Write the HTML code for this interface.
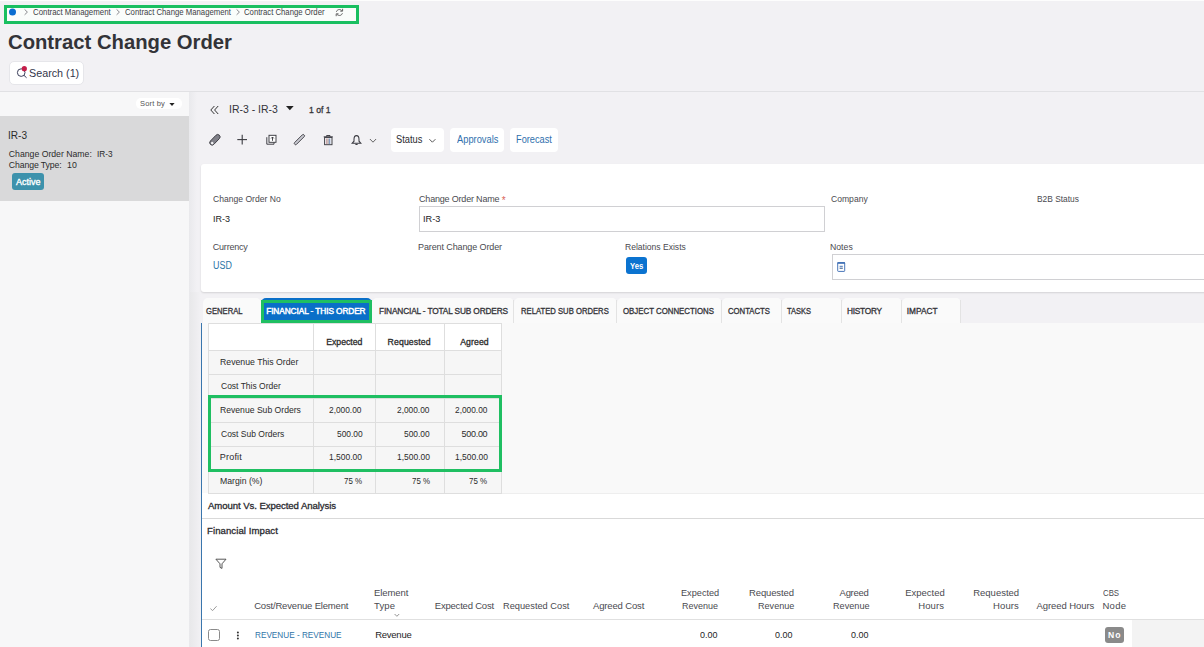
<!DOCTYPE html>
<html><head><meta charset="utf-8"><style>
html,body{margin:0;padding:0}
body{width:1204px;height:647px;overflow:hidden;position:relative;background:#f2f1f4;font-family:"Liberation Sans",sans-serif}
</style></head><body>
<div style="position:absolute;left:0;top:0;width:1204px;height:1px;background:#fdfdfd"></div>
<div style="position:absolute;left:4px;top:5px;width:355px;height:18.7px;box-sizing:border-box;border:3px solid #19bf60;background:#fafdfb"></div>
<div style="position:absolute;left:9px;top:60.5px;width:75px;height:24.5px;box-sizing:border-box;background:#fff;border:1px solid #e6e6ea;border-radius:5px"></div>
<div style="position:absolute;left:0;top:91px;width:1204px;height:1px;background:#e1e1e4"></div>
<div style="position:absolute;left:0;top:92px;width:189px;height:555px;background:#f7f7f8"></div>
<div style="position:absolute;left:189px;top:92px;width:8px;height:555px;background:linear-gradient(to right,#e9e9ec,#f2f1f4)"></div>
<div style="position:absolute;left:135.5px;top:98px;width:46px;height:11px;background:#fff;border-radius:5px"></div>
<div style="position:absolute;left:0;top:116px;width:189px;height:85px;background:#d9d9da"></div>
<div style="position:absolute;left:12px;top:173px;width:32px;height:17px;background:#3d92ac;border-radius:3px"></div>
<div style="position:absolute;left:391px;top:128px;width:53px;height:23.6px;background:#fff;border-radius:4px"></div>
<div style="position:absolute;left:450px;top:128px;width:54px;height:23.6px;background:#fff;border-radius:4px"></div>
<div style="position:absolute;left:510px;top:128px;width:48px;height:23.6px;background:#fff;border-radius:4px"></div>
<div style="position:absolute;left:201px;top:164px;width:1020px;height:128px;background:#fff;border-radius:3px;box-shadow:0 1px 2px rgba(0,0,0,0.13)"></div>
<div style="position:absolute;left:419px;top:206px;width:406px;height:26px;box-sizing:border-box;border:1px solid #d0d0d3"></div>
<div style="position:absolute;left:831.5px;top:254px;width:400px;height:26px;box-sizing:border-box;border:1px solid #d0d0d3"></div>
<div style="position:absolute;left:626px;top:257px;width:21px;height:17px;background:#0b73d0;border-radius:3px"></div>
<div style="position:absolute;left:190px;top:292px;width:11px;height:355px;background:linear-gradient(to right,#e8e8ea,#f2f1f4)"></div>
<div style="position:absolute;left:202.5px;top:298px;width:58.5px;height:25px;background:#fafafa;border-radius:5px 5px 0 0"></div>
<div style="position:absolute;left:372px;top:298px;width:142px;height:25px;background:#fafafa;border-radius:5px 5px 0 0"></div>
<div style="position:absolute;left:514px;top:298px;width:102.5px;height:25px;background:#fafafa;border-radius:5px 5px 0 0"></div>
<div style="position:absolute;left:616.5px;top:298px;width:105.0px;height:25px;background:#fafafa;border-radius:5px 5px 0 0"></div>
<div style="position:absolute;left:721.5px;top:298px;width:60.0px;height:25px;background:#fafafa;border-radius:5px 5px 0 0"></div>
<div style="position:absolute;left:781.5px;top:298px;width:60.0px;height:25px;background:#fafafa;border-radius:5px 5px 0 0"></div>
<div style="position:absolute;left:841.5px;top:298px;width:60.0px;height:25px;background:#fafafa;border-radius:5px 5px 0 0"></div>
<div style="position:absolute;left:901.5px;top:298px;width:59.5px;height:25px;background:#fafafa;border-radius:5px 5px 0 0"></div>
<div style="position:absolute;left:371px;top:300px;width:1px;height:23px;background:#e3e3e3"></div>
<div style="position:absolute;left:513px;top:300px;width:1px;height:23px;background:#e3e3e3"></div>
<div style="position:absolute;left:615.5px;top:300px;width:1px;height:23px;background:#e3e3e3"></div>
<div style="position:absolute;left:720.5px;top:300px;width:1px;height:23px;background:#e3e3e3"></div>
<div style="position:absolute;left:780.5px;top:300px;width:1px;height:23px;background:#e3e3e3"></div>
<div style="position:absolute;left:840.5px;top:300px;width:1px;height:23px;background:#e3e3e3"></div>
<div style="position:absolute;left:900.5px;top:300px;width:1px;height:23px;background:#e3e3e3"></div>
<div style="position:absolute;left:960px;top:300px;width:1px;height:23px;background:#e3e3e3"></div>
<div style="position:absolute;left:261px;top:298px;width:111px;height:25px;background:#0a6fc8;border-radius:5px 5px 0 0"></div>
<div style="position:absolute;left:261px;top:300px;width:111px;height:23px;box-sizing:border-box;border:3px solid #1fbf62"></div>
<div style="position:absolute;left:201px;top:323px;width:1003px;height:170px;background:#f9f9f9"></div>
<div style="position:absolute;left:201px;top:493px;width:1003px;height:154px;background:#fff"></div>
<div style="position:absolute;left:501px;top:493px;width:703px;height:1px;background:#eeeeee"></div>
<div style="position:absolute;left:201px;top:323px;width:1.3px;height:324px;background:#3a76ad"></div>
<div style="position:absolute;left:208px;top:323px;width:293px;height:27px;background:#fff"></div>
<div style="position:absolute;left:208px;top:350px;width:293px;height:143px;background:#f6f6f6"></div>
<div style="position:absolute;left:208px;top:323px;width:1px;height:170px;background:#dedede"></div>
<div style="position:absolute;left:313px;top:323px;width:1px;height:170px;background:#dedede"></div>
<div style="position:absolute;left:375px;top:323px;width:1px;height:170px;background:#dedede"></div>
<div style="position:absolute;left:443.5px;top:323px;width:1px;height:170px;background:#dedede"></div>
<div style="position:absolute;left:501px;top:323px;width:1px;height:170px;background:#dedede"></div>
<div style="position:absolute;left:208px;top:323px;width:294px;height:1px;background:#dedede"></div>
<div style="position:absolute;left:208px;top:350px;width:294px;height:1px;background:#dedede"></div>
<div style="position:absolute;left:208px;top:374px;width:294px;height:1px;background:#dedede"></div>
<div style="position:absolute;left:208px;top:398px;width:294px;height:1px;background:#dedede"></div>
<div style="position:absolute;left:208px;top:422px;width:294px;height:1px;background:#dedede"></div>
<div style="position:absolute;left:208px;top:446px;width:294px;height:1px;background:#dedede"></div>
<div style="position:absolute;left:208px;top:470px;width:294px;height:1px;background:#dedede"></div>
<div style="position:absolute;left:208px;top:493px;width:294px;height:1px;background:#dedede"></div>
<div style="position:absolute;left:208px;top:395px;width:294px;height:76.5px;box-sizing:border-box;border:3px solid #1fbf62"></div>
<div style="position:absolute;left:202px;top:518px;width:1002px;height:1px;background:#d9d9d9"></div>
<div style="position:absolute;left:1132px;top:620px;width:72px;height:27px;background:#f3f3f3"></div>
<div style="position:absolute;left:202px;top:619px;width:1002px;height:1px;background:#e0e0e0"></div>
<div style="position:absolute;left:208.2px;top:629.3px;width:11.6px;height:11.3px;box-sizing:border-box;border:1px solid #8a8a8a;border-radius:2.5px;background:#fff"></div>
<div style="position:absolute;left:1105px;top:627.2px;width:19px;height:15.5px;background:#8a8a8a;border-radius:3px"></div>
<div style="position:absolute;left:501.8px;top:196px;font:400 10px 'Liberation Sans',sans-serif;color:#d9645a;line-height:10px">*</div>
<svg style="position:absolute;left:0;top:0" width="1204" height="647" viewBox="0 0 1204 647">
<circle cx="12.5" cy="12" r="3.5" fill="#0a6ed1"/>
<g fill="none" stroke="#7a7a80" stroke-width="0.9">
<polyline points="24.6,9.4 27.4,12.1 24.6,14.8"/>
<polyline points="116.6,9.4 119.4,12.1 116.6,14.8"/>
<polyline points="236.6,9.4 239.4,12.1 236.6,14.8"/>
</g>
<g fill="none" stroke="#555" stroke-width="0.9">
<path d="M336.4,11.8 C337,9.6 339.6,8.6 341.8,10.6"/><polyline points="342.6,8.8 342.6,11.2 340.3,11.2"/>
<path d="M342.4,13.2 C341.8,15.4 339.2,16.4 337,14.4"/><polyline points="336.2,16.2 336.2,13.8 338.5,13.8"/>
</g>
<g fill="none" stroke="#3a3d5a" stroke-width="1">
<circle cx="21.2" cy="72.6" r="3.8"/><line x1="24" y1="75.4" x2="26.6" y2="77.8"/>
</g>
<circle cx="24.3" cy="68.7" r="2.6" fill="#c41e4a"/>
<polygon points="169.4,102.9 174.6,102.9 172,105.9" fill="#222"/>
<g fill="none" stroke="#333" stroke-width="1">
<polyline points="214.4,106 210.8,110 214.4,114"/><polyline points="218.2,106 214.6,110 218.2,114"/>
</g>
<polygon points="286,106 293.7,106 289.85,110.2" fill="#222"/>
<g transform="translate(214.9,139.8) rotate(-46)"><rect x="-6.4" y="-2.4" width="12.8" height="4.8" rx="2.4" fill="#808088" stroke="#3a3a40" stroke-width="0.9"/><circle cx="-4.3" cy="0.4" r="1.3" fill="#f4f4f6"/></g>
<g stroke="#3a3a40" stroke-width="1.1"><line x1="242.2" y1="134.8" x2="242.2" y2="144.4"/><line x1="237.3" y1="139.6" x2="247" y2="139.6"/></g>
<g fill="none" stroke="#3a3a40" stroke-width="0.95">
<rect x="269" y="135.3" width="7" height="7" fill="#fff"/>
<polyline points="266.8,137.2 266.8,144.2 274,144.2 274,142.4"/>
<line x1="272.5" y1="137" x2="272.5" y2="140.8"/><polyline points="271.2,138.4 272.5,137 273.8,138.4"/>
</g>
<g transform="translate(299.4,139.6) rotate(-45)"><rect x="-6.6" y="-1.3" width="13.2" height="2.6" rx="1.1" fill="#c8c8d0" stroke="#3a3a40" stroke-width="0.85"/></g>
<g fill="none" stroke="#3a3a40" stroke-width="0.95">
<line x1="323.7" y1="136.8" x2="332.8" y2="136.8"/><polyline points="326.6,136.6 326.6,135.5 330,135.5 330,136.6"/>
<rect x="324.6" y="137.4" width="7.4" height="7.3"/>
</g>
<line x1="326.9" y1="138.5" x2="326.9" y2="144" stroke="#b07878" stroke-width="1"/>
<line x1="328.3" y1="138.5" x2="328.3" y2="144" stroke="#999" stroke-width="0.8"/>
<line x1="329.7" y1="138.5" x2="329.7" y2="144" stroke="#6a88b8" stroke-width="1"/>
<g fill="none" stroke="#3a3a40" stroke-width="1.05">
<path d="M356.5,135.6 C354.2,135.6 354,137.6 354,139.4 L354,141.2 L352.2,143.2 L360.8,143.2 L359,141.2 L359,139.4 C359,137.6 358.8,135.6 356.5,135.6 Z"/>
<line x1="355.4" y1="144.5" x2="357.6" y2="144.5"/>
</g>
<polyline points="369.9,139 373,142.2 376.1,139" fill="none" stroke="#555" stroke-width="0.9"/>
<polyline points="429.4,139.2 432.4,142.2 435.4,139.2" fill="none" stroke="#444" stroke-width="0.9"/>
<g fill="none" stroke="#3f6fb5" stroke-width="0.95"><rect x="837.7" y="262.6" width="7" height="8.8" rx="0.6"/><line x1="839.6" y1="266.3" x2="842.8" y2="266.3"/></g>
<rect x="837.4" y="262.2" width="7.6" height="1.6" fill="#3f6fb5"/>
<line x1="839.6" y1="268.2" x2="842.8" y2="268.2" stroke="#2a4f80" stroke-width="1"/>
<path d="M215.9,559.2 H226 L222,563.8 V568.4 L220,567.4 V563.8 Z" fill="none" stroke="#444" stroke-width="0.9"/>
<polyline points="210.4,608.6 212.6,610.6 216.6,606.2" fill="none" stroke="#8a8a8a" stroke-width="0.85"/>
<polyline points="394.6,614 396.9,616.3 399.2,614" fill="none" stroke="#777" stroke-width="0.8"/>
<g fill="#333"><circle cx="237.9" cy="632.4" r="1"/><circle cx="237.9" cy="635.5" r="1"/><circle cx="237.9" cy="638.6" r="1"/></g>
</svg>
<div id="t0" style="position:absolute;left:32.80px;top:7.60px;font-size:8.5px;line-height:8.5px;font-weight:400;color:#3d3d45;letter-spacing:0.000px;white-space:nowrap;transform:scaleX(0.9239);transform-origin:left top;">Contract Management</div>
<div id="t1" style="position:absolute;left:124.60px;top:7.60px;font-size:8.5px;line-height:8.5px;font-weight:400;color:#3d3d45;letter-spacing:0.000px;white-space:nowrap;transform:scaleX(0.9121);transform-origin:left top;">Contract Change Management</div>
<div id="t2" style="position:absolute;left:244.40px;top:7.60px;font-size:8.5px;line-height:8.5px;font-weight:400;color:#3d3d45;letter-spacing:0.000px;white-space:nowrap;transform:scaleX(0.9114);transform-origin:left top;">Contract Change Order</div>
<div id="t3" style="position:absolute;left:8.00px;top:30.92px;font-size:21px;line-height:21px;font-weight:700;color:#333338;letter-spacing:0.000px;white-space:nowrap;transform:scaleX(0.9645);transform-origin:left top;">Contract Change Order</div>
<div id="t4" style="position:absolute;left:28.80px;top:68.29px;font-size:11px;line-height:11px;font-weight:400;color:#33354a;letter-spacing:0.000px;white-space:nowrap;transform:scaleX(0.9775);transform-origin:left top;">Search (1)</div>
<div id="t5" style="position:absolute;left:140.00px;top:100.05px;font-size:7.5px;line-height:7.5px;font-weight:400;color:#555;letter-spacing:0.167px;white-space:nowrap;">Sort by</div>
<div id="t6" style="position:absolute;left:7.80px;top:130.43px;font-size:11.3px;line-height:11.3px;font-weight:400;color:#2b2b2b;letter-spacing:0.000px;white-space:nowrap;transform:scaleX(0.8920);transform-origin:left top;">IR-3</div>
<div id="t7" style="position:absolute;left:8.80px;top:149.64px;font-size:8.7px;line-height:8.7px;font-weight:400;color:#2b2b2b;letter-spacing:0.000px;white-space:nowrap;">Change Order Name:</div>
<div id="t8" style="position:absolute;left:97.00px;top:149.64px;font-size:8.7px;line-height:8.7px;font-weight:400;color:#2b2b2b;letter-spacing:0.000px;white-space:nowrap;transform:scaleX(0.9485);transform-origin:left top;">IR-3</div>
<div id="t9" style="position:absolute;left:8.80px;top:160.64px;font-size:8.7px;line-height:8.7px;font-weight:400;color:#2b2b2b;letter-spacing:-0.091px;white-space:nowrap;">Change Type:</div>
<div id="t10" style="position:absolute;left:66.80px;top:160.64px;font-size:8.7px;line-height:8.7px;font-weight:400;color:#2b2b2b;letter-spacing:0.000px;white-space:nowrap;transform:scaleX(1.0105);transform-origin:left top;">10</div>
<div id="t11" style="position:absolute;left:16.00px;top:178.38px;font-size:9px;line-height:9px;font-weight:400;color:#ffffff;letter-spacing:0.000px;white-space:nowrap;-webkit-text-stroke:0.35px #ffffff;">Active</div>
<div id="t12" style="position:absolute;left:229.40px;top:104.32px;font-size:11.2px;line-height:11.2px;font-weight:400;color:#333338;letter-spacing:0.000px;white-space:nowrap;transform:scaleX(0.9334);transform-origin:left top;">IR-3 - IR-3</div>
<div id="t13" style="position:absolute;left:308.80px;top:104.50px;font-size:9.8px;line-height:9.8px;font-weight:400;color:#333338;letter-spacing:0.000px;white-space:nowrap;-webkit-text-stroke:0.3px #333338;transform:scaleX(0.8844);transform-origin:left top;">1 of 1</div>
<div id="t14" style="position:absolute;left:396.40px;top:135.44px;font-size:10px;line-height:10px;font-weight:400;color:#2b2b30;letter-spacing:0.000px;white-space:nowrap;transform:scaleX(0.9296);transform-origin:left top;">Status</div>
<div id="t15" style="position:absolute;left:457.00px;top:135.44px;font-size:10px;line-height:10px;font-weight:400;color:#2f6fad;letter-spacing:0.000px;white-space:nowrap;transform:scaleX(0.9318);transform-origin:left top;">Approvals</div>
<div id="t16" style="position:absolute;left:516.00px;top:135.44px;font-size:10px;line-height:10px;font-weight:400;color:#2f6fad;letter-spacing:0.000px;white-space:nowrap;transform:scaleX(0.9211);transform-origin:left top;">Forecast</div>
<div id="t17" style="position:absolute;left:212.80px;top:195.38px;font-size:9.0px;line-height:9.0px;font-weight:400;color:#4a4a4f;letter-spacing:0.000px;white-space:nowrap;transform:scaleX(0.9522);transform-origin:left top;">Change Order No</div>
<div id="t18" style="position:absolute;left:419.00px;top:195.38px;font-size:9.0px;line-height:9.0px;font-weight:400;color:#4a4a4f;letter-spacing:-0.188px;white-space:nowrap;">Change Order Name</div>
<div id="t19" style="position:absolute;left:830.80px;top:195.38px;font-size:9.0px;line-height:9.0px;font-weight:400;color:#4a4a4f;letter-spacing:0.000px;white-space:nowrap;transform:scaleX(0.9530);transform-origin:left top;">Company</div>
<div id="t20" style="position:absolute;left:1037.00px;top:195.38px;font-size:9.0px;line-height:9.0px;font-weight:400;color:#4a4a4f;letter-spacing:0.000px;white-space:nowrap;transform:scaleX(0.9318);transform-origin:left top;">B2B Status</div>
<div id="t21" style="position:absolute;left:212.80px;top:243.38px;font-size:9.0px;line-height:9.0px;font-weight:400;color:#4a4a4f;letter-spacing:-0.214px;white-space:nowrap;">Currency</div>
<div id="t22" style="position:absolute;left:418.00px;top:243.38px;font-size:9.0px;line-height:9.0px;font-weight:400;color:#4a4a4f;letter-spacing:-0.111px;white-space:nowrap;">Parent Change Order</div>
<div id="t23" style="position:absolute;left:624.60px;top:243.38px;font-size:9.0px;line-height:9.0px;font-weight:400;color:#4a4a4f;letter-spacing:0.000px;white-space:nowrap;transform:scaleX(0.9493);transform-origin:left top;">Relations Exists</div>
<div id="t24" style="position:absolute;left:829.80px;top:243.38px;font-size:9.0px;line-height:9.0px;font-weight:400;color:#4a4a4f;letter-spacing:0.000px;white-space:nowrap;transform:scaleX(0.9668);transform-origin:left top;">Notes</div>
<div id="t25" style="position:absolute;left:212.80px;top:213.50px;font-size:9.8px;line-height:9.8px;font-weight:400;color:#222;letter-spacing:0.000px;white-space:nowrap;transform:scaleX(0.9199);transform-origin:left top;">IR-3</div>
<div id="t26" style="position:absolute;left:422.60px;top:213.50px;font-size:9.8px;line-height:9.8px;font-weight:400;color:#222;letter-spacing:0.000px;white-space:nowrap;transform:scaleX(0.9378);transform-origin:left top;">IR-3</div>
<div id="t27" style="position:absolute;left:213.00px;top:261.44px;font-size:10px;line-height:10px;font-weight:400;color:#2a74a6;letter-spacing:0.000px;white-space:nowrap;transform:scaleX(0.8916);transform-origin:left top;">USD</div>
<div id="t28" style="position:absolute;left:630.00px;top:261.72px;font-size:8.6px;line-height:8.6px;font-weight:700;color:#ffffff;letter-spacing:0.000px;white-space:nowrap;transform:scaleX(0.8963);transform-origin:left top;">Yes</div>
<div id="t29" style="position:absolute;left:206.20px;top:306.97px;font-size:8.3px;line-height:8.3px;font-weight:400;color:#333338;letter-spacing:0.000px;white-space:nowrap;-webkit-text-stroke:0.3px #333338;transform:scaleX(0.9238);transform-origin:left top;">GENERAL</div>
<div id="t30" style="position:absolute;left:266.20px;top:306.97px;font-size:8.3px;line-height:8.3px;font-weight:400;color:#ffffff;letter-spacing:-0.095px;white-space:nowrap;-webkit-text-stroke:0.45px #ffffff;">FINANCIAL - THIS ORDER</div>
<div id="t31" style="position:absolute;left:379.00px;top:306.97px;font-size:8.3px;line-height:8.3px;font-weight:400;color:#333338;letter-spacing:-0.148px;white-space:nowrap;-webkit-text-stroke:0.3px #333338;">FINANCIAL - TOTAL SUB ORDERS</div>
<div id="t32" style="position:absolute;left:521.00px;top:306.97px;font-size:8.3px;line-height:8.3px;font-weight:400;color:#333338;letter-spacing:0.000px;white-space:nowrap;-webkit-text-stroke:0.3px #333338;transform:scaleX(0.9257);transform-origin:left top;">RELATED SUB ORDERS</div>
<div id="t33" style="position:absolute;left:622.80px;top:306.97px;font-size:8.3px;line-height:8.3px;font-weight:400;color:#333338;letter-spacing:0.000px;white-space:nowrap;-webkit-text-stroke:0.3px #333338;transform:scaleX(0.9459);transform-origin:left top;">OBJECT CONNECTIONS</div>
<div id="t34" style="position:absolute;left:728.00px;top:306.97px;font-size:8.3px;line-height:8.3px;font-weight:400;color:#333338;letter-spacing:0.000px;white-space:nowrap;-webkit-text-stroke:0.3px #333338;transform:scaleX(0.9333);transform-origin:left top;">CONTACTS</div>
<div id="t35" style="position:absolute;left:787.20px;top:306.97px;font-size:8.3px;line-height:8.3px;font-weight:400;color:#333338;letter-spacing:0.000px;white-space:nowrap;-webkit-text-stroke:0.3px #333338;transform:scaleX(0.9002);transform-origin:left top;">TASKS</div>
<div id="t36" style="position:absolute;left:847.00px;top:306.97px;font-size:8.3px;line-height:8.3px;font-weight:400;color:#333338;letter-spacing:-0.250px;white-space:nowrap;-webkit-text-stroke:0.3px #333338;">HISTORY</div>
<div id="t37" style="position:absolute;left:906.80px;top:306.97px;font-size:8.3px;line-height:8.3px;font-weight:400;color:#333338;letter-spacing:0.000px;white-space:nowrap;-webkit-text-stroke:0.3px #333338;">IMPACT</div>
<div id="t38" style="position:absolute;left:326.20px;top:337.64px;font-size:8.7px;line-height:8.7px;font-weight:400;color:#2b2b2b;letter-spacing:0.000px;white-space:nowrap;-webkit-text-stroke:0.3px #2b2b2b;">Expected</div>
<div id="t39" style="position:absolute;left:387.60px;top:337.64px;font-size:8.7px;line-height:8.7px;font-weight:400;color:#2b2b2b;letter-spacing:0.125px;white-space:nowrap;-webkit-text-stroke:0.3px #2b2b2b;">Requested</div>
<div id="t40" style="position:absolute;left:460.20px;top:337.64px;font-size:8.7px;line-height:8.7px;font-weight:400;color:#2b2b2b;letter-spacing:0.100px;white-space:nowrap;-webkit-text-stroke:0.3px #2b2b2b;">Agreed</div>
<div id="t41" style="position:absolute;left:219.80px;top:357.68px;font-size:9.0px;line-height:9.0px;font-weight:400;color:#2b2b2b;letter-spacing:0.000px;white-space:nowrap;transform:scaleX(0.9682);transform-origin:left top;">Revenue This Order</div>
<div id="t42" style="position:absolute;left:220.80px;top:382.38px;font-size:9.0px;line-height:9.0px;font-weight:400;color:#2b2b2b;letter-spacing:0.000px;white-space:nowrap;transform:scaleX(0.9429);transform-origin:left top;">Cost This Order</div>
<div id="t43" style="position:absolute;left:219.80px;top:405.58px;font-size:9.0px;line-height:9.0px;font-weight:400;color:#2b2b2b;letter-spacing:0.000px;white-space:nowrap;transform:scaleX(0.9572);transform-origin:left top;">Revenue Sub Orders</div>
<div id="t44" style="position:absolute;left:329.40px;top:405.58px;font-size:9.0px;line-height:9.0px;font-weight:400;color:#2b2b2b;letter-spacing:0.000px;white-space:nowrap;transform:scaleX(0.9262);transform-origin:left top;">2,000.00</div>
<div id="t45" style="position:absolute;left:397.20px;top:405.58px;font-size:9.0px;line-height:9.0px;font-weight:400;color:#2b2b2b;letter-spacing:0.000px;white-space:nowrap;transform:scaleX(0.9262);transform-origin:left top;">2,000.00</div>
<div id="t46" style="position:absolute;left:455.40px;top:405.58px;font-size:9.0px;line-height:9.0px;font-weight:400;color:#2b2b2b;letter-spacing:0.000px;white-space:nowrap;transform:scaleX(0.9246);transform-origin:left top;">2,000.00</div>
<div id="t47" style="position:absolute;left:220.80px;top:429.68px;font-size:9.0px;line-height:9.0px;font-weight:400;color:#2b2b2b;letter-spacing:0.000px;white-space:nowrap;transform:scaleX(0.9434);transform-origin:left top;">Cost Sub Orders</div>
<div id="t48" style="position:absolute;left:336.60px;top:429.68px;font-size:9.0px;line-height:9.0px;font-weight:400;color:#2b2b2b;letter-spacing:0.000px;white-space:nowrap;transform:scaleX(0.9341);transform-origin:left top;">500.00</div>
<div id="t49" style="position:absolute;left:404.40px;top:429.68px;font-size:9.0px;line-height:9.0px;font-weight:400;color:#2b2b2b;letter-spacing:0.000px;white-space:nowrap;transform:scaleX(0.9341);transform-origin:left top;">500.00</div>
<div id="t50" style="position:absolute;left:461.60px;top:429.68px;font-size:9.0px;line-height:9.0px;font-weight:400;color:#2b2b2b;letter-spacing:-0.300px;white-space:nowrap;">500.00</div>
<div id="t51" style="position:absolute;left:219.80px;top:452.68px;font-size:9.0px;line-height:9.0px;font-weight:400;color:#2b2b2b;letter-spacing:0.200px;white-space:nowrap;">Profit</div>
<div id="t52" style="position:absolute;left:328.80px;top:452.68px;font-size:9.0px;line-height:9.0px;font-weight:400;color:#2b2b2b;letter-spacing:0.000px;white-space:nowrap;transform:scaleX(0.9412);transform-origin:left top;">1,500.00</div>
<div id="t53" style="position:absolute;left:396.60px;top:452.68px;font-size:9.0px;line-height:9.0px;font-weight:400;color:#2b2b2b;letter-spacing:0.000px;white-space:nowrap;transform:scaleX(0.9412);transform-origin:left top;">1,500.00</div>
<div id="t54" style="position:absolute;left:454.80px;top:452.68px;font-size:9.0px;line-height:9.0px;font-weight:400;color:#2b2b2b;letter-spacing:0.000px;white-space:nowrap;transform:scaleX(0.9412);transform-origin:left top;">1,500.00</div>
<div id="t55" style="position:absolute;left:219.80px;top:477.48px;font-size:9.0px;line-height:9.0px;font-weight:400;color:#2b2b2b;letter-spacing:0.000px;white-space:nowrap;transform:scaleX(0.9637);transform-origin:left top;">Margin (%)</div>
<div id="t56" style="position:absolute;left:344.20px;top:477.48px;font-size:9.0px;line-height:9.0px;font-weight:400;color:#2b2b2b;letter-spacing:0.000px;white-space:nowrap;transform:scaleX(0.8815);transform-origin:left top;">75 %</div>
<div id="t57" style="position:absolute;left:412.00px;top:477.48px;font-size:9.0px;line-height:9.0px;font-weight:400;color:#2b2b2b;letter-spacing:0.000px;white-space:nowrap;transform:scaleX(0.8790);transform-origin:left top;">75 %</div>
<div id="t58" style="position:absolute;left:469.20px;top:477.48px;font-size:9.0px;line-height:9.0px;font-weight:400;color:#2b2b2b;letter-spacing:0.000px;white-space:nowrap;transform:scaleX(0.8815);transform-origin:left top;">75 %</div>
<div id="t59" style="position:absolute;left:208.00px;top:500.87px;font-size:9.6px;line-height:9.6px;font-weight:400;color:#2b2b30;letter-spacing:-0.074px;white-space:nowrap;-webkit-text-stroke:0.3px #2b2b30;">Amount Vs. Expected Analysis</div>
<div id="t60" style="position:absolute;left:207.00px;top:525.57px;font-size:9.6px;line-height:9.6px;font-weight:400;color:#2b2b30;letter-spacing:0.067px;white-space:nowrap;-webkit-text-stroke:0.3px #2b2b30;">Financial Impact</div>
<div id="t61" style="position:absolute;left:254.20px;top:600.86px;font-size:9.5px;line-height:9.5px;font-weight:400;color:#4a4a50;letter-spacing:-0.184px;white-space:nowrap;">Cost/Revenue Element</div>
<div id="t62" style="position:absolute;left:374.00px;top:587.86px;font-size:9.5px;line-height:9.5px;font-weight:400;color:#4a4a50;letter-spacing:-0.083px;white-space:nowrap;">Element</div>
<div id="t63" style="position:absolute;left:374.00px;top:600.86px;font-size:9.5px;line-height:9.5px;font-weight:400;color:#4a4a50;letter-spacing:0.167px;white-space:nowrap;">Type</div>
<div id="t64" style="position:absolute;left:434.80px;top:600.86px;font-size:9.5px;line-height:9.5px;font-weight:400;color:#4a4a50;letter-spacing:-0.208px;white-space:nowrap;">Expected Cost</div>
<div id="t65" style="position:absolute;left:502.80px;top:600.86px;font-size:9.5px;line-height:9.5px;font-weight:400;color:#4a4a50;letter-spacing:0.000px;white-space:nowrap;transform:scaleX(0.9739);transform-origin:left top;">Requested Cost</div>
<div id="t66" style="position:absolute;left:593.00px;top:600.86px;font-size:9.5px;line-height:9.5px;font-weight:400;color:#4a4a50;letter-spacing:-0.150px;white-space:nowrap;">Agreed Cost</div>
<div id="t67" style="position:absolute;left:680.60px;top:587.86px;font-size:9.5px;line-height:9.5px;font-weight:400;color:#4a4a50;letter-spacing:0.000px;white-space:nowrap;transform:scaleX(0.9650);transform-origin:left top;">Expected</div>
<div id="t68" style="position:absolute;left:682.20px;top:600.86px;font-size:9.5px;line-height:9.5px;font-weight:400;color:#4a4a50;letter-spacing:0.000px;white-space:nowrap;transform:scaleX(0.9459);transform-origin:left top;">Revenue</div>
<div id="t69" style="position:absolute;left:749.00px;top:587.86px;font-size:9.5px;line-height:9.5px;font-weight:400;color:#4a4a50;letter-spacing:-0.125px;white-space:nowrap;">Requested</div>
<div id="t70" style="position:absolute;left:757.60px;top:600.86px;font-size:9.5px;line-height:9.5px;font-weight:400;color:#4a4a50;letter-spacing:0.000px;white-space:nowrap;transform:scaleX(0.9572);transform-origin:left top;">Revenue</div>
<div id="t71" style="position:absolute;left:839.60px;top:587.86px;font-size:9.5px;line-height:9.5px;font-weight:400;color:#4a4a50;letter-spacing:-0.300px;white-space:nowrap;">Agreed</div>
<div id="t72" style="position:absolute;left:832.60px;top:600.86px;font-size:9.5px;line-height:9.5px;font-weight:400;color:#4a4a50;letter-spacing:0.000px;white-space:nowrap;transform:scaleX(0.9623);transform-origin:left top;">Revenue</div>
<div id="t73" style="position:absolute;left:905.20px;top:587.86px;font-size:9.5px;line-height:9.5px;font-weight:400;color:#4a4a50;letter-spacing:-0.000px;white-space:nowrap;">Expected</div>
<div id="t74" style="position:absolute;left:918.20px;top:600.86px;font-size:9.5px;line-height:9.5px;font-weight:400;color:#4a4a50;letter-spacing:0.125px;white-space:nowrap;">Hours</div>
<div id="t75" style="position:absolute;left:973.20px;top:587.86px;font-size:9.5px;line-height:9.5px;font-weight:400;color:#4a4a50;letter-spacing:-0.000px;white-space:nowrap;">Requested</div>
<div id="t76" style="position:absolute;left:993.00px;top:600.86px;font-size:9.5px;line-height:9.5px;font-weight:400;color:#4a4a50;letter-spacing:0.125px;white-space:nowrap;">Hours</div>
<div id="t77" style="position:absolute;left:1036.60px;top:600.86px;font-size:9.5px;line-height:9.5px;font-weight:400;color:#4a4a50;letter-spacing:-0.091px;white-space:nowrap;">Agreed Hours</div>
<div id="t78" style="position:absolute;left:1103.40px;top:587.86px;font-size:9.5px;line-height:9.5px;font-weight:400;color:#4a4a50;letter-spacing:0.000px;white-space:nowrap;transform:scaleX(0.8228);transform-origin:left top;">CBS</div>
<div id="t79" style="position:absolute;left:1102.40px;top:600.86px;font-size:9.5px;line-height:9.5px;font-weight:400;color:#4a4a50;letter-spacing:0.333px;white-space:nowrap;">Node</div>
<div id="t80" style="position:absolute;left:255.00px;top:629.86px;font-size:9.5px;line-height:9.5px;font-weight:400;color:#2f74a8;letter-spacing:0.000px;white-space:nowrap;transform:scaleX(0.8627);transform-origin:left top;">REVENUE - REVENUE</div>
<div id="t81" style="position:absolute;left:375.20px;top:629.86px;font-size:9.5px;line-height:9.5px;font-weight:400;color:#1e1e1e;letter-spacing:-0.250px;white-space:nowrap;">Revenue</div>
<div id="t82" style="position:absolute;left:699.60px;top:629.86px;font-size:9.5px;line-height:9.5px;font-weight:400;color:#1e1e1e;letter-spacing:0.000px;white-space:nowrap;transform:scaleX(0.9444);transform-origin:left top;">0.00</div>
<div id="t83" style="position:absolute;left:775.00px;top:629.86px;font-size:9.5px;line-height:9.5px;font-weight:400;color:#1e1e1e;letter-spacing:0.000px;white-space:nowrap;transform:scaleX(0.9444);transform-origin:left top;">0.00</div>
<div id="t84" style="position:absolute;left:850.80px;top:629.86px;font-size:9.5px;line-height:9.5px;font-weight:400;color:#1e1e1e;letter-spacing:0.000px;white-space:nowrap;transform:scaleX(0.9444);transform-origin:left top;">0.00</div>
<div id="t85" style="position:absolute;left:1108.00px;top:631.22px;font-size:8.6px;line-height:8.6px;font-weight:700;color:#ffffff;letter-spacing:1.000px;white-space:nowrap;">No</div>
</body></html>
